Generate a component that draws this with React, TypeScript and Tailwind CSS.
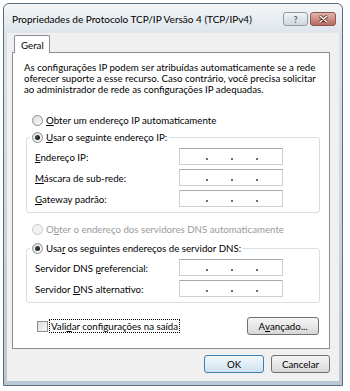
import React from "react";

function U({ children }: { children: React.ReactNode }) {
  return <span className="underline decoration-[1px] underline-offset-[1px]">{children}</span>;
}

function Radio({ checked, disabled }: { checked?: boolean; disabled?: boolean }) {
  return (
    <span
      className={
        disabled
          ? "flex h-[11px] w-[11px] shrink-0 items-center justify-center rounded-full border border-[#c9c9c9] bg-[#f2f2f2]"
          : "flex h-[11px] w-[11px] shrink-0 items-center justify-center rounded-full border border-[#8c8c8c] bg-gradient-to-br from-[#dcdcdc] to-[#fafafa]"
      }
    >
      {checked && <span className="h-[5px] w-[5px] rounded-full bg-gradient-to-br from-[#555] to-[#111]" />}
    </span>
  );
}

function IpBox() {
  return (
    <div className="flex h-[17px] w-[104px] items-end gap-[23px] border border-[#cfcfcf] border-t-[#a9a9a9] bg-white pb-[4px] pl-[26px]">
      <span className="h-[2px] w-[2px] bg-[#6d6d6d]" />
      <span className="h-[2px] w-[2px] bg-[#6d6d6d]" />
      <span className="h-[2px] w-[2px] bg-[#6d6d6d]" />
    </div>
  );
}

function Row({ label }: { label: React.ReactNode }) {
  return (
    <div className="flex h-[17px] items-center">
      <span className="w-[144px] leading-[14px]">{label}</span>
      <IpBox />
    </div>
  );
}

function VistaButton({ children, primary, width }: { children: React.ReactNode; primary?: boolean; width: string }) {
  return (
    <button
      type="button"
      className={
        (primary
          ? "border-[#3c7fb1] bg-gradient-to-b from-[#f0f6fa] via-[#e2eef6] to-[#cfe1ec] "
          : "border-[#707070] bg-gradient-to-b from-[#f4f4f4] via-[#e9e9e9] to-[#d6d6d6] ") +
        width +
        " flex h-[18px] items-center justify-center rounded-[3px] border text-[9.7px] leading-[12px] text-black"
      }
    >
      {children}
    </button>
  );
}

export default function App() {
  return (
    <div className="h-[391px] w-[350px] overflow-hidden bg-white pl-[3px] pt-[3px] font-['Lato',sans-serif] text-[9.7px] text-black">
      <div className="flex h-[383px] w-[340px] flex-col rounded-t-[6px] border border-[#5a6b7b] bg-gradient-to-b from-[#dfe6ec] to-[#b9c8d4]">
        {/* title bar */}
        <div className="flex h-[29px] items-end rounded-t-[6px] bg-gradient-to-b from-[#f4f6f8] to-[#dee5eb] pb-[7px] pl-[8px] pr-[6px]">
          <span className="flex-1 whitespace-nowrap text-[10px] leading-[14px]">
            Propriedades de Protocolo TCP/IP Versão 4 (TCP/IPv4)
          </span>
          <div className="flex gap-[2px]">
            <div className="flex h-[14px] w-[25px] items-center justify-center rounded-[3px] border border-[#8d9aa6] bg-gradient-to-b from-[#f2f4f6] to-[#cfd7de] text-[9px] font-bold leading-none text-[#5b6670]">
              ?
            </div>
            <div className="flex h-[14px] w-[26px] items-center justify-center rounded-[3px] border border-[#8b5750] bg-gradient-to-b from-[#e4b3ab] to-[#b86a60]">
              <svg width="9" height="8" viewBox="0 0 9 8">
                <path d="M1 1 L8 7 M8 1 L1 7" stroke="#5b2a24" strokeWidth="3" strokeLinecap="round" />
                <path d="M1 1 L8 7 M8 1 L1 7" stroke="#ffffff" strokeWidth="1.6" strokeLinecap="round" />
              </svg>
            </div>
          </div>
        </div>

        {/* body */}
        <div className="mx-[3px] mb-[4px] flex flex-1 flex-col bg-[#f0f0f0] pl-[5px] pt-[2px]">
          <div className="relative z-10 -mb-px ml-[2px] flex h-[18px] w-[36px] items-center rounded-t-[2px] border border-b-0 border-[#898c95] bg-white pl-[6px] pt-[1px]">
            Geral
          </div>
          <div className="flex h-[297px] w-[318px] flex-col border border-[#898c95] bg-white">
            <p className="whitespace-nowrap pl-[11px] pt-[9px] leading-[11px]">
              As configurações IP podem ser atribuídas automaticamente se a rede
              <br />
              oferecer suporte a esse recurso. Caso contrário, você precisa solicitar
              <br />
              ao administrador de rede as configurações IP adequadas.
            </p>

            <div className="mt-[18px] flex h-[14px] items-center gap-[3px] pl-[19px]">
              <Radio />
              <span>
                <U>O</U>bter um endereço IP automaticamente
              </span>
            </div>

            <fieldset className="ml-[13px] mt-[3px] w-[294px] rounded-[3px] border border-[#d5dfe5] pb-[5px] pl-[8px] pt-[4px]">
              <legend className="-ml-[5px] flex h-[14px] items-center gap-[3px] px-[2px]">
                <Radio checked />
                <span>
                  <U>U</U>sar o seguinte endereço IP:
                </span>
              </legend>
              <div className="flex flex-col gap-[4px]">
                <Row label={<><U>E</U>ndereço IP:</>} />
                <Row label={<><U>M</U>áscara de sub-rede:</>} />
                <Row label={<><U>G</U>ateway padrão:</>} />
              </div>
            </fieldset>

            <div className="mt-[9px] flex h-[14px] items-center gap-[3px] pl-[19px] text-[#9a9a9a]">
              <Radio disabled />
              <span>
                O<U>b</U>ter o endereço dos servidores DNS automaticamente
              </span>
            </div>

            <fieldset className="ml-[13px] mt-[5px] w-[294px] rounded-[3px] border border-[#d5dfe5] pb-[5px] pl-[8px] pt-[4px]">
              <legend className="-ml-[5px] flex h-[14px] items-center gap-[3px] px-[2px]">
                <Radio checked />
                <span>
                  Usa<U>r</U> os seguintes endereços de servidor DNS:
                </span>
              </legend>
              <div className="flex flex-col gap-[4px]">
                <Row label={<>Servidor DNS <U>p</U>referencial:</>} />
                <Row label={<>Servidor <U>D</U>NS alternativo:</>} />
              </div>
            </fieldset>

            <div className="mt-[14px] flex items-center justify-between pl-[24px] pr-[10px]">
              <div className="flex items-center">
                <span className="h-[11px] w-[11px] border border-[#8f8f8f] bg-gradient-to-br from-[#dedede] to-[#f8f8f8]" />
                <span className="ml-px border border-dotted border-black px-px leading-[12px]">
                  Vali<U>d</U>ar configurações na saída
                </span>
              </div>
              <VistaButton width="w-[72px]">
                A<U>v</U>ançado...
              </VistaButton>
            </div>
          </div>

          <div className="mt-[6px] flex justify-end gap-[7px] pr-[9px]">
            <VistaButton primary width="w-[60px]">
              OK
            </VistaButton>
            <VistaButton width="w-[59px]">Cancelar</VistaButton>
          </div>
        </div>
      </div>
    </div>
  );
}
